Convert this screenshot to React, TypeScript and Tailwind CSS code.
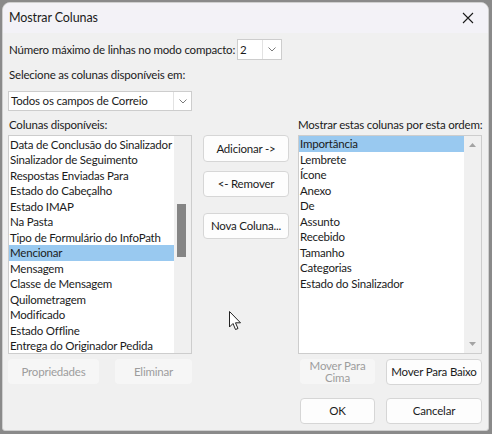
import React from "react";

const leftItems = [
  "Data de Conclusão do Sinalizador",
  "Sinalizador de Seguimento",
  "Respostas Enviadas Para",
  "Estado do Cabeçalho",
  "Estado IMAP",
  "Na Pasta",
  "Tipo de Formulário do InfoPath",
  "Mencionar",
  "Mensagem",
  "Classe de Mensagem",
  "Quilometragem",
  "Modificado",
  "Estado Offline",
  "Entrega do Originador Pedida",
];

const rightItems = [
  "Importância",
  "Lembrete",
  "Ícone",
  "Anexo",
  "De",
  "Assunto",
  "Recebido",
  "Tamanho",
  "Categorias",
  "Estado do Sinalizador",
];

function Chevron() {
  return (
    <svg width="8" height="5" viewBox="0 0 8 5" fill="none">
      <path d="M0.5 0.5 L4 4 L7.5 0.5" stroke="#7a7a7a" strokeWidth="1" />
    </svg>
  );
}

function Btn({
  children,
  className = "",
}: {
  children: React.ReactNode;
  className?: string;
}) {
  return (
    <div
      className={
        "flex items-center justify-center whitespace-nowrap rounded-[4px] border border-[#d6d6d6] bg-[#fdfdfd] text-[#1b1b1b] " +
        className
      }
    >
      {children}
    </div>
  );
}

function DisabledBtn({
  children,
  className = "",
}: {
  children: React.ReactNode;
  className?: string;
}) {
  return (
    <div
      className={
        "flex items-center justify-center whitespace-nowrap rounded-[4px] bg-[#f6f6f6] text-[#9d9d9d] text-center " +
        className
      }
    >
      {children}
    </div>
  );
}

export default function App() {
  return (
    <div
      className="relative w-[492px] h-[434px] overflow-hidden bg-[#8a8a8a] pl-[2px] pt-[2px] text-[11.5px] tracking-[-0.2px] text-[#1b1b1b]"
      style={{ fontFamily: 'Lato, "Noto Sans", sans-serif' }}
    >
      <div className="flex h-[429px] w-[487px] flex-col overflow-hidden rounded-t-[8px] rounded-b-[3px] border border-[#cfcfcf] bg-[#f0f0f0]">
        {/* Title bar */}
        <div className="flex h-[30px] shrink-0 items-center justify-between bg-[#f3f2f7] pl-[6px] pr-[14px]">
          <span className="text-[12.5px] leading-none tracking-[-0.1px] text-[#1b1b1b]">Mostrar Colunas</span>
          <svg width="12" height="12" viewBox="0 0 12 12">
            <path d="M1 1 L11 11 M11 1 L1 11" stroke="#1b1b1b" strokeWidth="1.1" />
          </svg>
        </div>

        {/* Body */}
        <div className="flex flex-col pl-[5px]">
          {/* Row 1 */}
          <div className="mt-[6px] flex h-[21px] items-center">
            <span className="w-[229px] whitespace-nowrap pl-[1px] leading-none">Número máximo de linhas no modo compacto:</span>
            <div className="flex h-[21px] w-[45px] items-stretch border border-[#cdcdcd] bg-white">
              <span className="flex flex-1 items-center pl-[2px] leading-none">2</span>
              <div className="flex w-[19px] items-center justify-center border-l border-[#e2e2e2]">
                <Chevron />
              </div>
            </div>
          </div>

          <div className="mt-[9px] h-[12px] whitespace-nowrap pl-[1px] leading-[12px]">Selecione as colunas disponíveis em:</div>

          <div className="mt-[10px] flex h-[20px] w-[184px] items-stretch border border-[#cdcdcd] bg-white">
            <span className="flex flex-1 items-center whitespace-nowrap pl-[2px] leading-none">Todos os campos de Correio</span>
            <div className="flex w-[18px] items-center justify-center border-l border-[#e2e2e2]">
              <Chevron />
            </div>
          </div>

          {/* Main three columns */}
          <div className="mt-[7px] flex">
            {/* Left column */}
            <div className="flex w-[184px] flex-col">
              <div className="h-[14px] whitespace-nowrap pl-[1px] leading-[14px]">Colunas disponíveis:</div>
              <div className="mt-[3px] flex h-[219px] border border-[#cdcdcd] bg-white">
                <div className="flex-1 overflow-hidden pt-[0.5px]">
                  {leftItems.map((t) => (
                    <div
                      key={t}
                      className={
                        "h-[15.5px] whitespace-nowrap pl-[1px] leading-[15.5px] " +
                        (t === "Mencionar" ? "bg-[#99c9f0]" : "")
                      }
                    >
                      {t}
                    </div>
                  ))}
                </div>
                <div className="relative w-[17px] bg-[#f0f0f0]">
                  <div className="absolute left-[3px] top-[68px] h-[53px] w-[9px] bg-[#858585]" />
                </div>
              </div>
              <div className="mt-[5px] flex justify-between">
                <DisabledBtn className="h-[25px] w-[91px]">Propriedades</DisabledBtn>
                <DisabledBtn className="h-[25px] w-[77px]">Eliminar</DisabledBtn>
              </div>
            </div>

            {/* Middle column */}
            <div className="ml-[11px] flex w-[86px] flex-col pt-[17px]">
              <Btn className="h-[27px]">Adicionar -&gt;</Btn>
              <Btn className="mt-[9px] h-[26px] border-[#5b9fe3]">&lt;- Remover</Btn>
              <Btn className="mt-[16px] h-[26px]">Nova Coluna...</Btn>
            </div>

            {/* Right column */}
            <div className="ml-[9px] flex w-[184px] flex-col">
              <div className="h-[14px] whitespace-nowrap leading-[14px]">Mostrar estas colunas por esta ordem:</div>
              <div className="mt-[3px] flex h-[219px] border border-[#cdcdcd] bg-white">
                <div className="flex-1 overflow-hidden pt-0">
                  {rightItems.map((t) => (
                    <div
                      key={t}
                      className={
                        "h-[15.5px] whitespace-nowrap pl-[1px] leading-[15.5px] " +
                        (t === "Importância" ? "bg-[#99c9f0]" : "")
                      }
                    >
                      {t}
                    </div>
                  ))}
                </div>
                <div className="flex w-[17px] flex-col items-center justify-between bg-[#f0f0f0] pb-[7px] pt-[7px]">
                  <svg width="7" height="4" viewBox="0 0 7 4">
                    <path d="M0 4 L3.5 0 L7 4 Z" fill="#a3a3a3" />
                  </svg>
                  <svg width="7" height="4" viewBox="0 0 7 4">
                    <path d="M0 0 L3.5 4 L7 0 Z" fill="#a3a3a3" />
                  </svg>
                </div>
              </div>
              <div className="mt-[5px] flex justify-between">
                <DisabledBtn className="ml-[2px] h-[25px] w-[75px] flex-col leading-[11.5px]">
                  <span>Mover Para</span>
                  <span>Cima</span>
                </DisabledBtn>
                <Btn className="h-[26px] w-[96px]">Mover Para Baixo</Btn>
              </div>
              <div className="mt-[13px] flex justify-between">
                <Btn className="ml-[2px] h-[26px] w-[75px]">OK</Btn>
                <Btn className="h-[26px] w-[96px]">Cancelar</Btn>
              </div>
            </div>
          </div>
        </div>
      </div>

      {/* Mouse cursor */}
      <svg
        className="absolute left-[229px] top-[311px]"
        width="13"
        height="20"
        viewBox="0 0 13 20"
      >
        <path
          d="M0.5 0.5 L0.5 16 L4 12.5 L6.5 18.5 L9 17.5 L6.5 11.8 L11.5 11.8 Z"
          fill="#ffffff"
          stroke="#222222"
          strokeWidth="1"
          strokeLinejoin="round"
        />
      </svg>
    </div>
  );
}
